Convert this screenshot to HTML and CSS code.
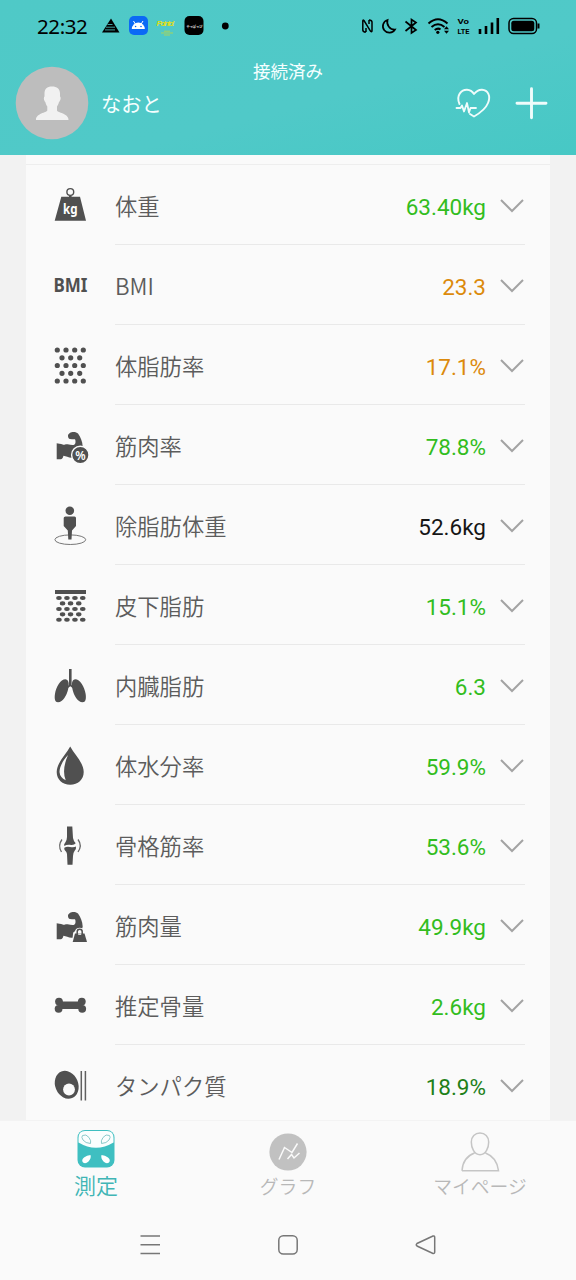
FILE: index.html
```html
<!DOCTYPE html>
<html lang="ja">
<head>
<meta charset="utf-8">
<title>測定</title>
<link rel="stylesheet" href="styles.css">
</head>
<body>
<div class="app">
  <header class="header">
    <div class="status">
      <span class="clock">22:32</span>
      <svg class="status-left" width="130" height="24" viewBox="100 14 130 24">
        <path d="M111 18.500L119.500 32.500H102Z"/>
        <path d="M107.500 24.500h5M106 27.200h9M105 29.900h10" stroke="#4dc8c7" stroke-width=".8"/>
        <rect x="129" y="16" width="19" height="19" rx="5" fill="#0b69f5"/>
        <path d="M131.800 29a6.500 6.500 0 0 1 13 0Z" fill="#fff"/>
        <path d="M133.500 21l1.800 3M143 21l-1.800 3" stroke="#fff" stroke-width="1"/>
        <circle cx="135.600" cy="26.500" r=".8" fill="#0b69f5"/><circle cx="141" cy="26.500" r=".8" fill="#0b69f5"/>
        <text class="logo-main" x="156.500" y="25.500" textLength="18">Pointo!</text>
        <path d="M161 33h12M164 31.200h6M164 35h6" stroke="#a8d45c" stroke-width="1"/>
        <rect x="184.500" y="16" width="19" height="19" rx="5"/>
        <text class="logo-small" x="186.500" y="27.500">やっぱっぴ</text>
        <circle cx="225.300" cy="26" r="3.400"/>
      </svg>
      <svg class="status-right" width="182" height="24" viewBox="360 14 182 24" fill="none" stroke="#000" stroke-width="1.700">
        <path d="M365.800 32.200Q362.800 32 362.800 30V21Q362.800 19.500 364 20.500L370.600 31.300Q372 32.500 372 30.500V22Q372 20 369 19.900M366 32V28M369 20V24" stroke-width="1.500"/>
        <path d="M387.500 20A6.500 6.500 0 1 0 395 29.500A7.500 7.500 0 0 1 387.500 20Z"/>
        <path d="M405.500 21.500L416 30L411.500 33V19.500L416 22.500L405.500 31"/>
        <path d="M428.500 23.500Q438 15 447.500 23.500M431.500 27Q438 21.500 444.500 27M434.700 30Q438 27.500 440.500 29.500" stroke-width="2"/>
        <circle cx="437.800" cy="32.300" r="1.600" fill="#000" stroke="none"/>
        <path d="M444 29.300l2.500-3l2.500 3ZM444 30.700l2.500 3l2.500-3Z" fill="#000" stroke="none"/>
        <g class="volte"><text x="457.500" y="24.300" textLength="11.500" lengthAdjust="spacingAndGlyphs">Vo</text><text x="457.500" y="34" textLength="12" lengthAdjust="spacingAndGlyphs">LTE</text></g>
        <path d="M480 34v-5M486 34v-8M492 34v-11.500M497.800 34V18" stroke-width="2.600"/>
        <rect x="509" y="18.500" width="27.500" height="15" rx="4.500" stroke-width="1.500"/>
        <rect x="511.300" y="20.800" width="23" height="10.400" rx="2.500" fill="#000" stroke="none"/>
        <path d="M538.500 23.500v5" stroke-width="2"/>
      </svg>
    </div>
    <p class="connection">接続済み</p>
    <div class="profile">
      <svg class="avatar" width="74" height="74" viewBox="0 0 74 74">
        <circle cx="37" cy="37" r="36.300" fill="#bdbdbd"/>
        <path d="M37 20.500c5 0 8 2.500 8 7v3c1.500 1 0 5-1 5.500c-.500 2-1.500 3.500-2 4.500v4c0 2 12 3 11.500 9.500H21c-.500-6.500 11-7.500 11.300-9.500v-4c-1-1-1.500-3-2-4.500c-1.300-1-2-4.500-.8-5.500v-3c0-4.500 2.500-7 7.500-7Z" fill="#f1f1f1"/>
      </svg>
      <span class="name">なおと</span>
      <svg class="head-icons" width="94" height="36" viewBox="454 85 94 36" fill="none" stroke="#effcfb" stroke-linejoin="round" stroke-linecap="round">
        <path d="M459.500 104C455.500 95 462 89.500 467 89.700Q471.500 90 474 94Q477.500 89.500 482 89.700C488 90 491 96 488 103C485.500 109.500 480 113 474 116.500L470 114" stroke-width="1.900"/>
        <path d="M456.500 108H460.500L462 105.500L464 111.500L467 103L469 112.500L470.500 108H476" stroke-width="1.800"/>
        <path d="M517 103.200h29M531.500 88.700v29" stroke-width="2.900"/>
      </svg>
    </div>
  </header>

  <main class="content">
    <ul class="card">
      <li class="row"><svg class="icon" viewBox="0 0 40 48"><circle cx="20.300" cy="11" r="3.400" fill="none" stroke="#505050" stroke-width="1.400"/><path d="M19 14.500h2.600v2H19ZM11.300 15.700H30L36 39.800H4.700Z"/><text class="icon-kg" x="13" y="33" textLength="14.500" lengthAdjust="spacingAndGlyphs">kg</text></svg>
        <div class="line"><span class="label">体重</span><span class="value good">63.40kg</span><svg class="chevron" viewBox="0 0 24 14"><path d="M1 1L12 12L23 1"/></svg></div></li>
      <li class="row"><svg class="icon" viewBox="0 0 40 48"><text class="icon-bmi" x="3.500" y="31" textLength="34" lengthAdjust="spacingAndGlyphs">BMI</text></svg>
        <div class="line"><span class="label">BMI</span><span class="value warn">23.3</span><svg class="chevron" viewBox="0 0 24 14"><path d="M1 1L12 12L23 1"/></svg></div></li>
      <li class="row"><svg class="icon" viewBox="0 0 40 48"><g class="dots"><path d="M7.300 9h.01M16 9h.01M24.700 9h.01M33.300 9h.01M12 16.800h.01M20.700 16.800h.01M29.700 16.800h.01M7.300 24.500h.01M16 24.500h.01M24.700 24.500h.01M33.300 24.500h.01M12 32.300h.01M20.700 32.300h.01M29.700 32.300h.01M7.300 40h.01M16 40h.01M24.700 40h.01M33.300 40h.01"/></g></svg>
        <div class="line"><span class="label">体脂肪率</span><span class="value warn">17.1%</span><svg class="chevron" viewBox="0 0 24 14"><path d="M1 1L12 12L23 1"/></svg></div></li>
      <li class="row"><svg class="icon" viewBox="0 0 40 48"><path id="arm" d="M18 15c0-2.500 3-4 5.500-4c2 0 3.500.700 4.500 1.500c2.500 3.500 4.500 8 4.700 13L30 36.500l-8.500.3c-3-.200-5.500-1.500-8-2c-.500 1.500-1 3-2.500 3.500H6.700V22.300c1.500.500 4 .200 6 1.200c1.500.800 2.800-.700 5-.200c2.500.500 5 1.200 6.500.500c1.700-1 1.600-4 .8-5.500c-2 .200-3.500-.300-5-.300c-1.300 0-2-1.500-2-3Z"/><circle cx="30.300" cy="34" r="8.700" stroke="#fafafa" stroke-width="1.400"/><text class="icon-pct" x="25.200" y="38.600" textLength="10.400" lengthAdjust="spacingAndGlyphs">%</text></svg>
        <div class="line"><span class="label">筋肉率</span><span class="value good">78.8%</span><svg class="chevron" viewBox="0 0 24 14"><path d="M1 1L12 12L23 1"/></svg></div></li>
      <li class="row"><svg class="icon" viewBox="0 0 40 48"><ellipse cx="20.300" cy="38.700" rx="15.400" ry="4.800" fill="none" stroke="#777" stroke-width="1"/><circle cx="19.800" cy="9.700" r="4.300"/><path d="M15.500 15.400H24.500Q26 15.400 26 17V25L22 29.500L21.500 38.500H18.300L17.800 29.500L13.700 25V17Q13.700 15.400 15.500 15.400Z"/></svg>
        <div class="line"><span class="label">除脂肪体重</span><span class="value plain">52.6kg</span><svg class="chevron" viewBox="0 0 24 14"><path d="M1 1L12 12L23 1"/></svg></div></li>
      <li class="row"><svg class="icon" viewBox="0 0 40 48"><path d="M5 9H36v4H5Z"/><g class="dots" transform="scale(1 .8)"><path d="M8.700 21.200h.5M16.700 21.200h.5M24.700 21.200h.5M32.500 21.200h.5M12.300 28h.5M20.300 28h.5M28.500 28h.5M8.700 35h.5M16.700 35h.5M24.700 35h.5M32.500 35h.5M12.300 41.700h.5M20.300 41.700h.5M28.500 41.700h.5M8.700 48.400h.5M16.700 48.400h.5M24.700 48.400h.5M32.500 48.400h.5"/></g></svg>
        <div class="line"><span class="label">皮下脂肪</span><span class="value good">15.1%</span><svg class="chevron" viewBox="0 0 24 14"><path d="M1 1L12 12L23 1"/></svg></div></li>
      <li class="row"><svg class="icon" viewBox="0 0 40 48"><path d="M19 8h2.600V24l3 2.500l-1 1.300l-3.300-2.500l-3.300 2.500l-1-1.300l3-2.500Z"/><path d="M15.500 18.300c4 .700 3.500 6 2.500 10.500c-1.200 5.500-5 12.500-10 12.500c-3 0-3.800-3.500-3-8.500c1-6.500 5.500-14.500 10.500-14.500ZM25.100 18.300c-4 .700-3.500 6-2.500 10.500c1.200 5.500 5 12.500 10 12.500c3 0 3.800-3.500 3-8.500c-1-6.500-5.500-14.500-10.500-14.500Z"/></svg>
        <div class="line"><span class="label">内臓脂肪</span><span class="value good">6.3</span><svg class="chevron" viewBox="0 0 24 14"><path d="M1 1L12 12L23 1"/></svg></div></li>
      <li class="row"><svg class="icon" viewBox="0 0 40 48"><path d="M20.200 5.500C25 14 33.700 22 33.700 31C33.700 38.500 28 43.800 20.200 43.800S6.700 38.500 6.700 31C6.700 22 15.500 14 20.200 5.500Z"/><path d="M18 14C12.500 20 9.500 26 9.500 31Q10 36.500 15.700 39.300Q11.500 29 18 14Z" fill="#fafafa"/></svg>
        <div class="line"><span class="label">体水分率</span><span class="value good">59.9%</span><svg class="chevron" viewBox="0 0 24 14"><path d="M1 1L12 12L23 1"/></svg></div></li>
      <li class="row"><svg class="icon" viewBox="0 0 40 48"><path d="M17 5.500H22.300L23 17Q23.500 20 25.700 22.300Q24 24.500 20 23.800Q16.500 23.500 14.300 25Q13.500 23.300 15.300 21.500Q16.800 20 17 16ZM14.300 26.800Q17 25 20 26Q24 26.800 26 25.500Q26.500 28 24.500 30Q23 32 23 35L22.500 43.800H17.500L17 33Q16.700 30.500 15 29.500Q14 28.500 14.300 26.800Z"/><path d="M12 18.500Q7.500 24.500 11.500 31M28 18.500Q32.500 24.500 28 31" fill="none" stroke="#686868" stroke-width="1.300"/></svg>
        <div class="line"><span class="label">骨格筋率</span><span class="value good">53.6%</span><svg class="chevron" viewBox="0 0 24 14"><path d="M1 1L12 12L23 1"/></svg></div></li>
      <li class="row"><svg class="icon" viewBox="0 0 40 48"><use href="#arm"/><path d="M22 41.800L23.200 31.500Q24 31 25 30A5 5 0 0 1 34.400 30Q35 31.200 36.300 31.800L38.500 41.800Z" fill="#fafafa"/><path d="M25 32.500H34.500L37 41H22.700Z"/><path d="M27.200 33v-2.200a2.500 2.500 0 0 1 5 0V33" fill="none" stroke="#505050" stroke-width="1.500"/><path d="M28.200 33.200h3" stroke="#fafafa" stroke-width="1.200"/></svg>
        <div class="line"><span class="label">筋肉量</span><span class="value good">49.9kg</span><svg class="chevron" viewBox="0 0 24 14"><path d="M1 1L12 12L23 1"/></svg></div></li>
      <li class="row"><svg class="icon" viewBox="0 0 40 48"><path d="M9 20.500H32V28H9Z"/><circle cx="9" cy="20.600" r="3.900"/><circle cx="8.600" cy="27.800" r="3.900"/><circle cx="31.800" cy="20.600" r="3.900"/><circle cx="32.200" cy="27.800" r="3.900"/></svg>
        <div class="line"><span class="label">推定骨量</span><span class="value good">2.6kg</span><svg class="chevron" viewBox="0 0 24 14"><path d="M1 1L12 12L23 1"/></svg></div></li>
      <li class="row"><svg class="icon" viewBox="0 0 40 48"><ellipse cx="16.700" cy="23.800" rx="11.500" ry="14.300" transform="rotate(-22 16.700 23.800)"/><circle cx="19" cy="28.500" r="5.900" fill="#fafafa"/><path d="M31.300 10v29.500M35.400 10v29.500" stroke="#606060" stroke-width="1.500"/></svg>
        <div class="line"><span class="label">タンパク質</span><span class="value strong">18.9%</span><svg class="chevron" viewBox="0 0 24 14"><path d="M1 1L12 12L23 1"/></svg></div></li>
    </ul>
  </main>

  <nav class="tabs">
    <a class="tab active">
      <svg width="40" height="40" viewBox="0 0 40 40"><rect x="1.500" y="1" width="37" height="37.500" rx="7.500" fill="#3fbfc1"/><path d="M2.500 13.500V9Q2.500 2 9 2H31Q37.500 2 37.500 9V13.500Q20 24 2.500 13.500Z" fill="#fbfefe"/><path d="M6.500 6.500Q10 4.500 13 8.500Q15.500 12 14.500 14.500Q9.500 14.300 7 11Q5 8 6.500 6.500ZM33.500 6.500Q30 4.500 27 8.500Q24.500 12 25.500 14.500Q30.500 14.300 33 11Q35 8 33.500 6.500Z" fill="none" stroke="#8bcaca"/><path d="M14.500 26Q15.500 29 12.500 32.500Q9.500 35.500 7 33.500Q5 31 8 28.500Q11 26 14.500 26ZM25.500 26Q24.500 29 27.500 32.500Q30.500 35.500 33 33.500Q35 31 32 28.500Q29 26 25.500 26Z" fill="#fff"/></svg>
      <span>測定</span>
    </a>
    <a class="tab">
      <svg width="40" height="40" viewBox="0 0 40 40"><circle cx="20" cy="24" r="18.600" fill="#c1c1c1"/><path d="M11 31.500L16.500 19.500L24 24.500L29.500 15.500M14.500 24L16.500 19.500M19.500 31L23.500 26.500L26 30L31.500 25" fill="none" stroke="#fafafa" stroke-width="1.500"/></svg>
      <span>グラフ</span>
    </a>
    <a class="tab">
      <svg width="40" height="40" viewBox="0 0 40 40"><path d="M20 5C25 5 28.700 8.500 28.700 14C28.700 19.500 26 26.700 20 26.700S11.300 19.500 11.300 14C11.300 8.500 15 5 20 5ZM14.500 25C6.500 28 2.500 34.500 2 42.700M25.500 25C33.500 28 37.500 34.500 38.500 42.700H2" fill="none" stroke="#c5c5c5" stroke-width="1.500"/></svg>
      <span>マイページ</span>
    </a>
  </nav>
  <footer class="system">
    <svg width="24" height="24" viewBox="0 0 24 24"><path d="M2.500 3h19.500M2.500 11.800h19.500M2.500 20.500h19.500"/></svg>
    <svg width="24" height="24" viewBox="0 0 24 24"><rect x="2.800" y="2.700" width="18.400" height="18.400" rx="4.500"/></svg>
    <svg width="24" height="24" viewBox="0 0 24 24"><path d="M19 3L3 10.500Q1.500 11.800 3 13L19 20.500Q20.700 20.800 20.700 19V4.500Q20.700 2.500 19 3Z"/></svg>
  </footer>
</div>
</body>
</html>
```
FILE: styles.css
```css
* { box-sizing: border-box; }
body {
  margin: 0;
  font-family: "Noto Sans CJK JP", "Noto Sans", sans-serif;
  background: #fafafa;
}
svg { display: block; flex: none; overflow: visible; }
.app {
  width: 576px;
  height: 1280px;
  display: flex;
  flex-direction: column;
  overflow: hidden;
}
.header {
  height: 155px;
  flex: none;
  background: linear-gradient(165deg, #4fc9c7, #50c9c8 60%, #47c8c5);
  color: #f5ffff;
}
.status {
  height: 52px;
  padding: 0 34px 0 37px;
  display: flex;
  align-items: center;
}
.clock {
  width: 63px;
  font: 20.500px/24px "Noto Sans", sans-serif;
  letter-spacing: -.4px;
  color: #000;
}
.status-right { margin-left: auto; }
.logo-main { font: italic bold 8px "Liberation Sans", sans-serif; fill: #dede20; }
.logo-small { font: bold 3.200px "Noto Sans CJK JP", sans-serif; fill: #ddd; }
.volte { font: bold 8px "Roboto", sans-serif; fill: #000; stroke: none; }
.connection {
  margin: 10px 0 0;
  height: 18px;
  line-height: 18px;
  font-size: 17.500px;
  text-align: center;
}
.profile {
  display: flex;
  align-items: center;
  height: 74px;
  margin-top: -14px;
  padding: 0 28px 0 15px;
}
.name { margin-left: 12px; font-size: 20.300px; line-height: 30px; }
.head-icons { margin-left: auto; }

.content {
  height: 965px;
  flex: none;
  padding: 0 26px;
  overflow: hidden;
  background: #f2f2f2;
}
.card {
  list-style: none;
  margin: 0;
  padding: 9px 0 0;
  background: #fafafa;
}
.card::before {
  content: "";
  display: block;
  height: 1px;
  background: #eeeeee;
}
.row { display: flex; align-items: center; height: 80px; padding: 0 25px 0 24px; }
.icon { width: 40px; height: 48px; fill: #505050; }
.icon-kg { font: bold 13.500px "Noto Sans", sans-serif; fill: #fff; }
.icon-bmi { font: bold 19.500px "Noto Sans", sans-serif; }
.icon-pct { font: 600 13px "Noto Sans", sans-serif; fill: #fff; }
.dots { fill: none; stroke: #505050; stroke-width: 5.200; stroke-linecap: round; }
.line {
  flex: 1;
  height: 80px;
  margin-left: 25px;
  display: flex;
  align-items: center;
  border-bottom: 1px solid #e9e9e9;
}
.label { font-size: 22.300px; line-height: 32px; font-weight: 350; color: #5c5c5c; }
.value {
  margin-left: auto;
  margin-right: 14px;
  padding-top: 4px;
  font: 22.500px/30px "Roboto", sans-serif;
}
.good { color: #32bd20; }
.warn { color: #dc8a0c; }
.plain { color: #151515; }
.strong { color: #218018; }
.chevron { width: 24px; height: 14px; margin: 2px 1px 0 0; fill: none; stroke: #a3a3a3; stroke-width: 2; }

.tabs {
  height: 85px;
  flex: none;
  display: grid;
  grid-template-columns: repeat(3, 192px);
  border-top: 1px solid #f3f3f3;
  background: #fafafa;
}
.tab {
  display: flex;
  flex-direction: column;
  align-items: center;
  padding-top: 7px;
  font-size: 18.800px;
  font-weight: 350;
  line-height: 32px;
  color: #b8b8b8;
}
.tab span { margin-top: 2px; }
.active { padding-top: 8px; font-size: 22px; color: #40b5b5; }
.active span { margin-top: -1px; }
.system {
  height: 75px;
  display: flex;
  justify-content: center;
  gap: 114px;
  padding-top: 28px;
}
.system svg { fill: none; stroke: #777; stroke-width: 1.500; }
```
